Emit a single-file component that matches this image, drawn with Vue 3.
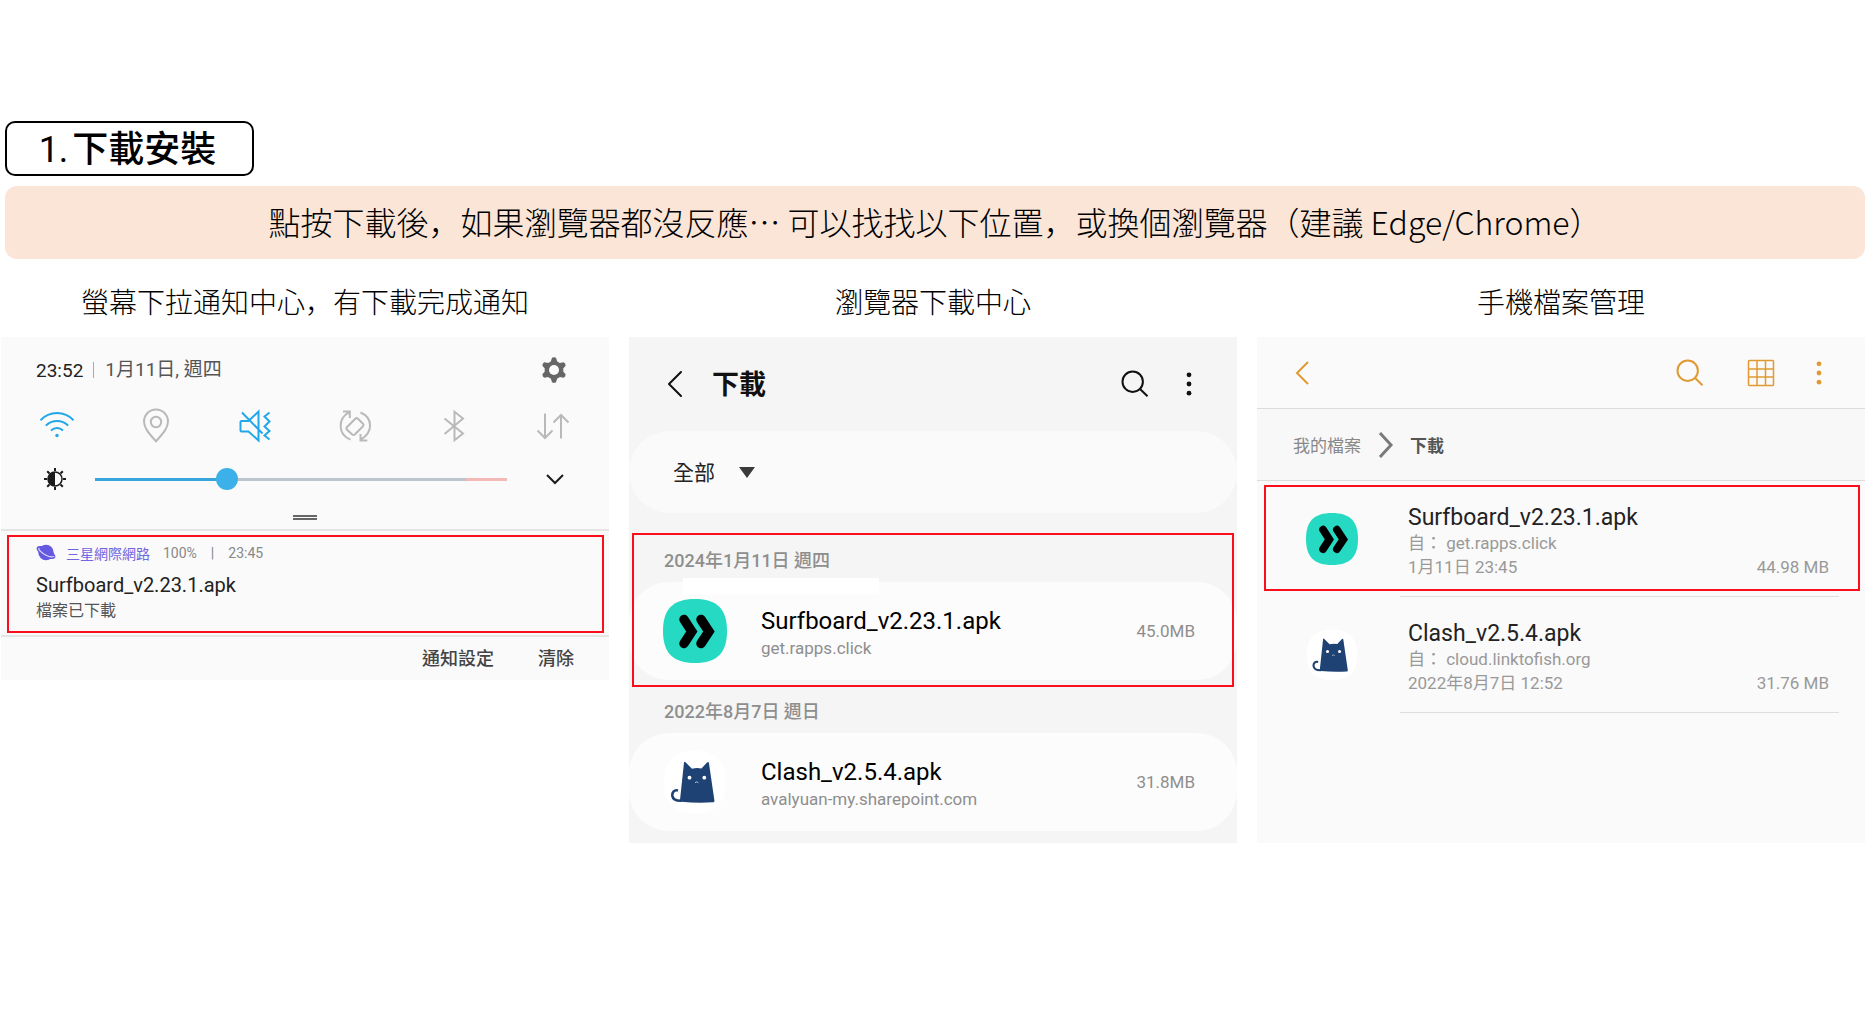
<script setup>
import { ref } from 'vue'

const brightness = ref(31)
const filter = ref('all')

const downloads = [
  { day: '2024年1月11日 週四', name: 'Surfboard_v2.23.1.apk', source: 'get.rapps.click', size: '45.0MB', app: 'surfboard', marked: true },
  { day: '2022年8月7日 週日', name: 'Clash_v2.5.4.apk', source: 'avalyuan-my.sharepoint.com', size: '31.8MB', app: 'clash', marked: false },
]

const files = [
  { name: 'Surfboard_v2.23.1.apk', source: '自： get.rapps.click', date: '1月11日 23:45', size: '44.98 MB', app: 'surfboard', marked: true },
  { name: 'Clash_v2.5.4.apk', source: '自： cloud.linktofish.org', date: '2022年8月7日 12:52', size: '31.76 MB', app: 'clash', marked: false },
]
</script>

<template>
  <main class="page">
    <svg class="defs" aria-hidden="true">
      <symbol id="app-surfboard" viewBox="0 0 64 64">
        <path d="M32 0C54 0 64 10 64 32S54 64 32 64 0 54 0 32 10 0 32 0Z" fill="#26d9c3" />
        <path d="M21 20.500L28.800 32.500 21 44.500M38 20.500L46 32.500 38 44.500" fill="none" stroke="#000" stroke-width="9.500" stroke-linecap="round" stroke-linejoin="miter" />
      </symbol>
      <symbol id="app-clash" viewBox="0 0 64 64">
        <path d="M32 1C53 1 63 11 63 32S53 63 32 63 1 53 1 32 11 1 32 1Z" fill="#fff" />
        <path d="M21 12.500C21.200 11.500 22 11.600 22.500 12.300L29 18.800Q34 17.500 38.500 18.600L44 12.600C44.800 11.700 45.700 11.700 45.900 12.800L51.400 50.500C51.500 51.800 51 52.300 50 52.300Q33 53.200 18.500 51.700C17.300 51.500 16.900 51 17 50Z" fill="#1f4274" />
        <path d="M15 40.500C11 39.500 8.800 42.500 9.300 45.800C9.900 49.500 13.500 51 18.500 50.800" fill="none" stroke="#1f4274" stroke-width="2.600" />
        <circle cx="26.500" cy="27.700" r="1.900" fill="#fff" />
        <circle cx="41.300" cy="27.700" r="1.900" fill="#fff" />
        <path d="M32 32.700L33.700 31.800 35.400 32.700" fill="none" stroke="#b9c3d3" />
      </symbol>
      <symbol id="icon-back" viewBox="0 0 28 28">
        <path d="M20 2L8 14 20 26" fill="none" stroke="currentColor" stroke-width="2" stroke-linecap="round" stroke-linejoin="round" />
      </symbol>
      <symbol id="icon-search" viewBox="0 0 28 28">
        <circle cx="11.700" cy="11.700" r="10.200" fill="none" stroke="currentColor" stroke-width="2" />
        <path d="M18.500 18.500L26.500 26.300" fill="none" stroke="currentColor" stroke-width="2" />
      </symbol>
      <symbol id="icon-more" viewBox="0 0 28 28">
        <g fill="currentColor">
          <circle cx="14" cy="4.800" r="2.400" />
          <circle cx="14" cy="14" r="2.400" />
          <circle cx="14" cy="23.200" r="2.400" />
        </g>
      </symbol>
    </svg>

    <h1 class="title">1.<strong>下載安裝</strong></h1>
    <p class="banner">點按下載後，如果瀏覽器都沒反應… 可以找找以下位置，或換個瀏覽器（建議 Edge/Chrome）</p>

    <div class="columns">
      <section>
        <h2 class="caption">螢幕下拉通知中心，有下載完成通知</h2>
        <div class="shade">
          <div class="quick">
            <div class="clock">
              <time class="time">23:52</time>
              <span class="rule"></span>
              <span class="date">1月11日, 週四</span>
              <button type="button" class="icon gear" aria-label="設定">
                <svg width="26" height="26" viewBox="0 0 26 26">
                  <path d="M11 0.800Q13 -0.400 15 0.800L16.200 4.500Q17.600 5 18.800 6L22.600 5.300Q24.700 6.300 24.600 8.700L22.200 11.500Q22.500 13 22.200 14.500L24.600 17.300Q24.700 19.700 22.600 20.700L18.800 20Q17.600 21 16.200 21.500L15 25.200Q13 26.400 11 25.200L9.800 21.500Q8.400 21 7.200 20L3.400 20.700Q1.300 19.700 1.400 17.300L3.800 14.500Q3.500 13 3.800 11.500L1.400 8.700Q1.300 6.300 3.400 5.300L7.200 6Q8.400 5 9.800 4.500Z" fill="#666" />
                  <circle cx="13" cy="13" r="5" fill="#fafafa" />
                </svg>
              </button>
            </div>

            <div class="toggles">
              <button type="button" class="icon on" aria-label="Wi-Fi">
                <svg width="36" height="36" viewBox="0 0 36 36" fill="none" stroke="currentColor" stroke-width="2">
                  <path d="M1.500 12.200C10.500 2.600 25.500 2.600 34.500 12.200M6.800 17.600C13 11.300 23 11.300 29.200 17.600M12 22.500C15.500 19.300 20.500 19.300 24 22.500" />
                  <circle cx="18" cy="27.500" r="1.700" fill="currentColor" stroke="none" />
                </svg>
              </button>
              <button type="button" class="icon" aria-label="位置">
                <svg width="36" height="36" viewBox="0 0 36 36" fill="none" stroke="currentColor" stroke-width="2">
                  <path d="M18 33.200C10 24.500 6 19.500 6 13.500A12 12 0 0 1 30 13.500C30 19.500 26 24.500 18 33.200Z" />
                  <circle cx="18" cy="14" r="5.200" />
                </svg>
              </button>
              <button type="button" class="icon on" aria-label="震動">
                <svg width="36" height="36" viewBox="0 0 36 36" fill="none" stroke="currentColor" stroke-width="2">
                  <path d="M3.500 14Q3.500 13 4.500 13H11.500L21.500 3.500V32.500L11.500 23.500H4.500Q3.500 23.500 3.500 22.500ZM5 4.500L25.500 25.500" />
                  <path d="M32.500 4.500L27.500 8.500 32.500 13.500 27.500 18.500 32.500 23 27.500 27.500 32.500 31.500" />
                </svg>
              </button>
              <button type="button" class="icon" aria-label="自動旋轉">
                <svg width="36" height="36" viewBox="0 0 36 36" fill="none" stroke="currentColor" stroke-width="2">
                  <path d="M9.800 19.200L18.300 10.700Q19.700 9.600 21 10.700L26 15.700Q27.200 17 26 18.300L17.800 26.500Q16.500 27.600 15.200 26.500L9.800 21.500Q8.800 20.300 9.800 19.200Z" />
                  <path d="M13.500 31.700C1 26.500 0 11 12.500 3.800M6 3.500H12.800V10" />
                  <path d="M23.500 4.500C36 9.700 36.500 24 23.500 31.800M30.300 32.500H23.500V26" />
                </svg>
              </button>
              <button type="button" class="icon" aria-label="藍牙">
                <svg width="36" height="36" viewBox="0 0 36 36" fill="none" stroke="currentColor" stroke-width="2">
                  <path d="M8.500 10.500L27 25.500 18.500 32.200V3.800L27 10.500 8.500 26" />
                </svg>
              </button>
              <button type="button" class="icon" aria-label="行動數據">
                <svg width="36" height="36" viewBox="0 0 36 36" fill="none" stroke="currentColor" stroke-width="2">
                  <path d="M10 5.500V29.500M2.500 22.500L10 30 17.500 22.500M26 30.500V7M18.500 14.500L26 7 33.500 14.500" />
                </svg>
              </button>
            </div>

            <div class="brightness">
              <svg width="24" height="24" viewBox="0 0 24 24" aria-hidden="true">
                <path d="M12 1V4M12 20V23M1 12H4M20 12H23M4.200 4.200L6.500 6.500M17.500 17.500L19.800 19.800M4.200 19.800L6.500 17.500M17.500 6.500L19.800 4.200" stroke="#1b1b1b" stroke-width="2" />
                <circle cx="12" cy="12" r="7" fill="none" stroke="#1b1b1b" stroke-width="1.500" />
                <path d="M12 5A7 7 0 0 0 12 19Z" fill="#1b1b1b" />
              </svg>
              <input v-model="brightness" class="slider" type="range" min="0" max="100" aria-label="亮度">
              <button type="button" class="icon expand" aria-label="展開">
                <svg width="20" height="20" viewBox="0 0 20 20">
                  <path d="M2 6L10 14 18 6" fill="none" stroke="#1b1b1b" stroke-width="2" />
                </svg>
              </button>
            </div>
            <div class="handle"></div>
          </div>

          <article class="notice">
            <div class="origin">
              <svg width="20" height="20" viewBox="0 0 20 20" aria-hidden="true">
                <ellipse cx="10" cy="9.500" rx="10.500" ry="4.500" transform="rotate(30 10 9.500)" fill="#6459e0" />
                <circle cx="10" cy="9.500" r="7.700" fill="#6459e0" />
                <path d="M3.300 5C1.500 6 5.500 10 10 12.200S17.800 14.300 18 13" fill="none" stroke="#dcd9fb" stroke-width="1.200" />
              </svg>
              <span class="sender">三星網際網路</span>
              <span>100%</span>
              <span class="bar">|</span>
              <time>23:45</time>
            </div>
            <h3 class="notice-name">Surfboard_v2.23.1.apk</h3>
            <p class="notice-state">檔案已下載</p>
          </article>

          <div class="actions">
            <button type="button">通知設定</button>
            <button type="button">清除</button>
          </div>
        </div>
      </section>

      <section>
        <h2 class="caption">瀏覽器下載中心</h2>
        <div class="browser">
          <header class="browser-bar">
            <button type="button" class="icon" aria-label="返回"><svg width="28" height="28"><use href="#icon-back" /></svg></button>
            <h3>下載</h3>
            <button type="button" class="icon push" aria-label="搜尋"><svg width="28" height="28"><use href="#icon-search" /></svg></button>
            <button type="button" class="icon more" aria-label="更多"><svg width="28" height="28"><use href="#icon-more" /></svg></button>
          </header>
          <div class="filter">
            <div class="picker">
              <select v-model="filter" aria-label="類型">
                <option value="all">全部</option>
              </select>
              <svg width="16" height="12" viewBox="0 0 16 12" aria-hidden="true"><path d="M0 0H16L8 11Z" fill="#3a3a3a" /></svg>
            </div>
          </div>
          <section v-for="item in downloads" :key="item.name" class="group">
            <h4>{{ item.day }}</h4>
            <div class="card">
              <svg width="64" height="64" aria-hidden="true"><use :href="'#app-' + item.app" /></svg>
              <div class="card-text">
                <p class="card-name">{{ item.name }}</p>
                <p class="card-source">{{ item.source }}</p>
              </div>
              <span class="card-size">{{ item.size }}</span>
            </div>
            <template v-if="item.marked">
              <span class="cover"></span>
              <span class="mark mark-group"></span>
            </template>
          </section>
        </div>
      </section>

      <section>
        <h2 class="caption">手機檔案管理</h2>
        <div class="manager">
          <header class="manager-bar">
            <button type="button" class="icon" aria-label="返回">
              <svg width="28" height="28" viewBox="0 0 28 28"><path d="M21 3L10 14 21 25" fill="none" stroke="currentColor" stroke-width="2" /></svg>
            </button>
            <button type="button" class="icon push" aria-label="搜尋"><svg width="28" height="28"><use href="#icon-search" /></svg></button>
            <button type="button" class="icon layout" aria-label="檢視">
              <svg width="28" height="28" viewBox="0 0 28 28" fill="none" stroke="currentColor" stroke-width="1.500">
                <rect x="1.500" y="1.500" width="25" height="25" rx="1" />
                <path d="M10 1.500V26.500M18.500 1.500V26.500M1.500 10H26.500M1.500 18H26.500" />
              </svg>
            </button>
            <button type="button" class="icon menu" aria-label="更多"><svg width="28" height="28"><use href="#icon-more" /></svg></button>
          </header>
          <nav class="crumbs">
            <a href="#">我的檔案</a>
            <svg width="16" height="28" viewBox="0 0 16 28" aria-hidden="true"><path d="M2 2L13 14 2 26" fill="none" stroke="#7a7a7a" stroke-width="3" /></svg>
            <strong>下載</strong>
          </nav>
          <ul class="files">
            <li v-for="file in files" :key="file.name">
              <svg width="52" height="52" aria-hidden="true"><use :href="'#app-' + file.app" /></svg>
              <div class="file-body">
                <p class="file-name">{{ file.name }}</p>
                <p>{{ file.source }}</p>
                <p class="file-meta"><span>{{ file.date }}</span><span>{{ file.size }}</span></p>
              </div>
              <span v-if="file.marked" class="mark mark-file"></span>
            </li>
          </ul>
        </div>
      </section>
    </div>
  </main>
</template>

<style>
body {
  margin: 0;
  background: #fff;
}
</style>

<style scoped>
.page {
  padding: 121px 3px 24px 1px;
  font-family: Roboto, "Noto Sans CJK TC", sans-serif;
  color: #000;
}
h1, h2, h3, h4, p, ul {
  margin: 0;
  padding: 0;
  font-weight: 400;
}
ul {
  list-style: none;
}
button, select {
  padding: 0;
  border: 0;
  background: none;
  font-family: inherit;
  color: inherit;
}
svg {
  display: block;
  flex: none;
}
.defs {
  position: absolute;
  width: 0;
  height: 0;
}
.title {
  box-sizing: border-box;
  width: 249px;
  margin-left: 4px;
  padding: 4px 4px 0 0;
  border: 2px solid #000;
  border-radius: 10px;
  font: 400 36px/47px Roboto, "Noto Sans CJK TC", sans-serif;
  text-align: center;
}
.title strong {
  margin-left: 4px;
  font-weight: 500;
}
.banner {
  margin: 10px 0 0 4px;
  padding-bottom: 2px;
  border-radius: 12px;
  background: #fae5d7;
  font: 300 32px/71px "Noto Sans CJK JP", sans-serif;
  text-align: center;
}
.columns {
  display: grid;
  grid-template-columns: repeat(3, minmax(0, 1fr));
  gap: 20px;
  align-items: start;
  margin-top: 24px;
}
.caption {
  margin-bottom: 18px;
  font: 300 28px/36px "Noto Sans CJK JP", sans-serif;
  text-align: center;
}
.icon {
  display: flex;
  cursor: pointer;
}
.push {
  margin-left: auto;
}
.mark {
  position: absolute;
  border: 2px solid #fb0d1b;
  pointer-events: none;
}

/* notification shade */
.shade {
  background: #fafafa;
}
.quick {
  padding: 20px 35px 9px;
  border-bottom: 2px solid #e5e5e5;
}
.clock {
  display: flex;
  align-items: center;
  height: 26px;
}
.time {
  font-size: 19px;
  color: #222;
}
.rule {
  width: 1px;
  height: 16px;
  margin: 0 11px 0 10px;
  background: #aaa;
}
.date {
  font-size: 19px;
  line-height: 26px;
  color: #555;
}
.gear {
  margin: 0 7px 0 auto;
}
.toggles {
  display: flex;
  justify-content: space-between;
  margin-top: 25px;
  padding: 0 3px;
  color: #b9b9b9;
}
.on {
  color: #20a8ea;
}
.brightness {
  display: flex;
  align-items: center;
  height: 24px;
  margin-top: 23px;
  padding: 0 9px 0 7px;
}
.slider {
  flex: 1;
  min-width: 0;
  height: 24px;
  margin: 0 38px 0 28px;
  appearance: none;
  background: linear-gradient(to right, #38a5dc 32%, #bcc5ce 32%, #bcc5ce 90%, #f2b9b7 90%) center / 100% 3px no-repeat;
}
.slider::-webkit-slider-thumb {
  appearance: none;
  width: 22px;
  height: 22px;
  border-radius: 50%;
  background: #3cb0e8;
}
.handle {
  width: 24px;
  height: 1px;
  margin: 24px auto 0;
  border: solid #666;
  border-width: 2px 0;
}
.notice {
  margin: 4px 5px 2px 6px;
  padding: 6px 27px 10px;
  border: 2px solid #fb0d1b;
}
.origin {
  display: flex;
  align-items: center;
  height: 20px;
  font-size: 14px;
  color: #888;
}
.sender {
  margin: 0 13px 0 10px;
  color: #6f65e0;
}
.bar {
  margin: 0 14px;
}
.notice-name {
  margin-top: 10px;
  font-size: 20px;
  line-height: 24px;
  color: #222;
}
.notice-state {
  margin-top: 4px;
  font-size: 16px;
  line-height: 20px;
  color: #555;
}
.actions {
  display: flex;
  justify-content: flex-end;
  gap: 44px;
  padding-right: 35px;
  border-top: 2px solid #e5e5e5;
}
.actions button {
  font-size: 18px;
  font-weight: 500;
  line-height: 43px;
  color: #444;
}

/* browser downloads */
.browser {
  padding-bottom: 12px;
  background: #f5f5f5;
}
.browser-bar {
  display: flex;
  align-items: center;
  height: 94px;
  padding: 0 34px 0 32px;
  color: #111;
}
.browser-bar h3 {
  margin-left: 23px;
  padding-bottom: 4px;
  font-size: 27px;
  font-weight: 700;
}
.more {
  margin-left: 26px;
}
.filter {
  display: flex;
  align-items: center;
  height: 82px;
  margin-bottom: 20px;
  padding-left: 44px;
  border-radius: 41px;
  background: #fafafa;
}
.picker {
  display: grid;
  align-items: center;
  padding-top: 2px;
}
.picker select {
  grid-area: 1 / 1;
  padding-right: 40px;
  appearance: none;
  font-size: 21px;
  line-height: 30px;
  color: #222;
}
.picker svg {
  grid-area: 1 / 1;
  justify-self: end;
  pointer-events: none;
}
.group {
  position: relative;
}
.group + .group {
  margin-top: 4px;
}
.group h4 {
  padding: 16px 35px 9px;
  font-size: 18px;
  font-weight: 500;
  line-height: 24px;
  color: #8e8e8e;
}
.card {
  display: flex;
  align-items: center;
  height: 98px;
  padding: 0 42px 0 34px;
  border-radius: 40px;
  background: #fcfcfc;
}
.card-text {
  flex: 1;
  margin-left: 34px;
  padding-top: 4px;
}
.card-name {
  font-size: 24px;
  line-height: 30px;
}
.card-source {
  font-size: 17px;
  line-height: 24px;
  color: #8e8e8e;
}
.card-size {
  font-size: 17px;
  color: #8e8e8e;
}
.cover {
  position: absolute;
  top: 45px;
  left: 54px;
  width: 196px;
  height: 16px;
  background: #fff;
}
.mark-group {
  inset: 0 3px -7px;
}

/* file manager */
.manager {
  padding-bottom: 130px;
  background: #fafafa;
}
.manager-bar {
  display: flex;
  align-items: center;
  height: 71px;
  padding: 0 32px 0 30px;
  border-bottom: 1px solid #dcdcdc;
  color: #e09a33;
}
.layout {
  margin-left: 43px;
}
.menu {
  margin-left: 30px;
}
.crumbs {
  display: flex;
  align-items: center;
  height: 71px;
  padding-left: 36px;
  border-bottom: 1px solid #dcdcdc;
  background: #f8f8f8;
  font-size: 17px;
  color: #555;
}
.crumbs a {
  color: #888;
  text-decoration: none;
}
.crumbs svg {
  margin: 0 16px 0 17px;
}
.crumbs strong {
  font-weight: 700;
}
.files li {
  position: relative;
  display: flex;
  align-items: center;
  padding-left: 49px;
}
.file-body {
  flex: 1;
  margin: 0 26px 0 42px;
  padding: 23px 10px 17px 8px;
  border-bottom: 1px solid #dedede;
  font-size: 17px;
  line-height: 24px;
  color: #999;
}
.file-name {
  font-size: 23px;
  line-height: 27px;
  color: #222;
}
.file-meta {
  display: flex;
  justify-content: space-between;
}
.mark-file {
  inset: 4px 5px 6px 7px;
}
</style>
